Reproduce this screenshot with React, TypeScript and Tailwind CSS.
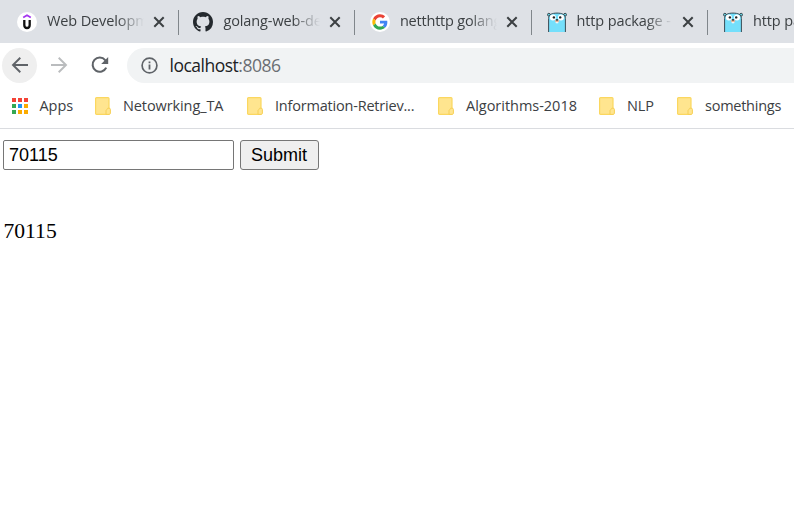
import type { ReactNode } from "react";

function Udemy() {
  return (
    <svg width="20" height="20" viewBox="0 0 20 20" className="shrink-0">
      <circle cx="10" cy="10" r="10" fill="#fff" />
      <path d="M6.2 5.5 10 3.3 13.8 5.5" fill="none" stroke="#a435f0" strokeWidth="1.8" />
      <path d="M7.3 8v5c0 2.1 1 3 2.7 3s2.7-.9 2.7-3V8" fill="none" stroke="#111" strokeWidth="2.3" />
    </svg>
  );
}

function Github() {
  return (
    <svg width="20" height="20" viewBox="0 0 16 16" className="shrink-0 -translate-x-px">
      <path
        fill="#24292e"
        d="M8 0C3.58 0 0 3.58 0 8c0 3.54 2.29 6.53 5.47 7.59.4.07.55-.17.55-.38 0-.19-.01-.82-.01-1.49-2.01.37-2.53-.49-2.69-.94-.09-.23-.48-.94-.82-1.13-.28-.15-.68-.52-.01-.53.63-.01 1.08.58 1.23.82.72 1.21 1.87.87 2.33.66.07-.52.28-.87.51-1.07-1.78-.2-3.64-.89-3.64-3.95 0-.87.31-1.59.82-2.15-.08-.2-.36-1.02.08-2.12 0 0 .67-.21 2.2.82.64-.18 1.32-.27 2-.27s1.36.09 2 .27c1.53-1.04 2.2-.82 2.2-.82.44 1.1.16 1.92.08 2.12.51.56.82 1.27.82 2.15 0 3.07-1.87 3.75-3.65 3.95.29.25.54.73.54 1.48 0 1.07-.01 1.93-.01 2.2 0 .21.15.46.55.38A8.01 8.01 0 0 0 16 8c0-4.42-3.58-8-8-8Z"
      />
    </svg>
  );
}

function Google() {
  return (
    <svg width="20" height="20" viewBox="0 0 20 20" className="shrink-0">
      <circle cx="10" cy="10" r="10" fill="#fff" />
      <g transform="translate(2.3 2.3) scale(.32)">
        <path fill="#EA4335" d="M24 9.5c3.54 0 6.71 1.22 9.21 3.6l6.85-6.85C35.9 2.38 30.47 0 24 0 14.62 0 6.51 5.38 2.56 13.22l7.98 6.19C12.43 13.72 17.74 9.5 24 9.5z" />
        <path fill="#4285F4" d="M46.98 24.55c0-1.57-.15-3.09-.38-4.55H24v9.02h12.94c-.58 2.96-2.26 5.48-4.78 7.18l7.73 6c4.51-4.18 7.09-10.36 7.09-17.65z" />
        <path fill="#FBBC05" d="M10.53 28.59A14.5 14.5 0 0 1 9.77 24c0-1.6.27-3.14.76-4.59l-7.98-6.19A23.99 23.99 0 0 0 0 24c0 3.88.92 7.54 2.56 10.78l7.97-6.19z" />
        <path fill="#34A853" d="M24 48c6.48 0 11.93-2.13 15.89-5.81l-7.73-6c-2.15 1.45-4.92 2.3-8.16 2.3-6.26 0-11.57-4.22-13.47-9.91l-7.98 6.19C6.51 42.62 14.62 48 24 48z" />
      </g>
    </svg>
  );
}

function Gopher() {
  return (
    <svg width="20" height="20" viewBox="0 0 20 20" className="shrink-0">
      <circle cx="1.9" cy="2.7" r="1.4" fill="#6ad7e5" stroke="#394b54" strokeWidth="1" />
      <circle cx="18.1" cy="2.7" r="1.4" fill="#6ad7e5" stroke="#394b54" strokeWidth="1" />
      <path d="M1.6 20V6.5C1.6 2.4 5 1.1 10 1.1s8.4 1.3 8.4 5.4V20" fill="#74dffb" stroke="#394b54" strokeWidth="1" />
      <circle cx="5.9" cy="5.4" r="3" fill="#fff" />
      <circle cx="14" cy="5.4" r="3" fill="#fff" />
      <circle cx="6.9" cy="5.4" r="1.2" fill="#222" />
      <circle cx="13.2" cy="5.4" r="1.2" fill="#222" />
      <rect x="8.7" y="9.5" width="2.6" height="1.7" rx=".5" fill="#fff" />
      <ellipse cx="10" cy="9" rx="2.2" ry="1.3" fill="#e8b69c" />
      <ellipse cx="10" cy="7.9" rx="1.2" ry=".8" fill="#333" />
    </svg>
  );
}

function Tab({ icon, title, tracking }: { icon: ReactNode; title: string; tracking: string }) {
  return (
    <div className="flex h-[43px] w-[176.5px] shrink-0 items-center pl-[15px]">
      {icon}
      <div
        className={`ml-[9.9px] w-[97px] -translate-y-px overflow-hidden whitespace-nowrap text-[14.5px] leading-[22px] text-[#3c4043] mask-[linear-gradient(to_right,black_72%,transparent)] ${tracking}`}
      >
        {title}
      </div>
      <svg width="12" height="12" viewBox="0 0 12 12" className="ml-[9px] shrink-0">
        <path d="m1.3 1.3 9.4 9.4M10.7 1.3 1.3 10.7" stroke="#3c4043" strokeWidth="2" />
      </svg>
      <div className="ml-auto h-[25px] w-px translate-y-px bg-[#80868b]" />
    </div>
  );
}

function Folder() {
  return (
    <svg width="16" height="18" viewBox="0 0 16 18" className="shrink-0">
      <rect x=".6" y=".6" width="13.4" height="16.8" rx="1" fill="#ffe58f" stroke="#fbd75f" strokeWidth="1.2" />
      <path d="M11 17.4v-3.7c0-1 .8-.8 1.2-1.5.2-.5.2-1 .7-1h1.3c.7 0 1.2.5 1.2 1.2v3.8c0 .7-.5 1.2-1.2 1.2Z" fill="#ffe58f" stroke="#f6cf55" strokeWidth="1" />
    </svg>
  );
}

function Bookmark({ label, width, tracking }: { label: string; width: string; tracking: string }) {
  return (
    <div className={`flex shrink-0 items-center ${width}`}>
      <Folder />
      <span className={`ml-[12px] whitespace-nowrap ${tracking}`}>{label}</span>
    </div>
  );
}

const appColors = ["#f44336", "#f44336", "#f44336", "#34a853", "#2196f3", "#fbab00", "#34a853", "#fbab00", "#fbab00"];

export default function App() {
  return (
    <div className="h-[532px] w-[794px] overflow-hidden bg-white font-['Open_Sans','Noto_Sans',sans-serif]">
      <div className="flex h-[43px] overflow-hidden bg-[#dee1e6] pl-[2px]">
        <Tab icon={<Udemy />} title="Web Development" tracking="tracking-[-0.1px]" />
        <Tab icon={<Github />} title="golang-web-dev" tracking="tracking-[-0.1px]" />
        <Tab icon={<Google />} title="netthttp golang" tracking="tracking-[-0.2px]" />
        <Tab icon={<Gopher />} title="http package - net" tracking="tracking-[-0.1px]" />
        <Tab icon={<Gopher />} title="http package - net" tracking="tracking-[-0.1px]" />
      </div>

      <div className="flex h-[45px] items-center pl-[2px]">
        <div className="flex size-[35px] items-center justify-center rounded-full bg-[#efefef]">
          <svg width="20" height="20" viewBox="0 0 20 20" className="-translate-y-px">
            <path d="M18 10H3M10.3 2.8 3 10l7.3 7.2" fill="none" stroke="#5f6368" strokeWidth="1.9" />
          </svg>
        </div>
        <svg width="20" height="20" viewBox="0 0 20 20" className="ml-[12px] -translate-y-px">
          <path d="M2 10h15M9.7 2.8 17 10l-7.3 7.2" fill="none" stroke="#babcbe" strokeWidth="1.9" />
        </svg>
        <svg width="20" height="20" viewBox="0 0 20 20" className="ml-[21px] -translate-y-px">
          <path d="M16.2 12.6A7.1 7.1 0 1 1 15.2 5.1L16 6" fill="none" stroke="#5f6368" strokeWidth="2.1" />
          <path d="M18.2 2v7h-7Z" fill="#5f6368" />
        </svg>
        <div className="ml-[17px] flex h-[35px] flex-1 items-center rounded-l-full bg-[#f1f3f4] pl-[14px]">
          <svg width="17" height="17" viewBox="0 0 17 17">
            <circle cx="8.5" cy="8.5" r="7.4" fill="none" stroke="#5f6368" strokeWidth="1.7" />
            <path d="M8.5 7.5v5M8.5 4.4v1.8" stroke="#5f6368" strokeWidth="1.8" />
          </svg>
          <span className="ml-[11.5px] -translate-y-px text-[17.5px] leading-6 tracking-[-0.5px] text-[#202124]">
            localhost<span className="text-[#6b6f73]">:8086</span>
          </span>
        </div>
      </div>

      <div className="flex h-[41px] items-start overflow-hidden border-b border-[#dadce0] text-[14.5px] leading-[22px] text-[#3c4043]">
        <div className="flex h-[36px] items-center">
          <div className="flex w-[95px] shrink-0 items-center pl-[12px]">
            <div className="grid grid-cols-3 gap-[2px]">
              {appColors.map((c, i) => (
                <div key={i} className="size-[4px]" style={{ background: c }} />
              ))}
            </div>
            <span className="ml-[11.5px] tracking-[-0.05px]">Apps</span>
          </div>
          <Bookmark label="Netowrking_TA" width="w-[152px]" tracking="tracking-[-0.1px]" />
          <Bookmark label="Information-Retriev..." width="w-[191px]" tracking="tracking-[-0.2px]" />
          <Bookmark label="Algorithms-2018" width="w-[161px]" tracking="tracking-[-0.02px]" />
          <Bookmark label="NLP" width="w-[78px]" tracking="tracking-[-0.1px]" />
          <Bookmark label="somethings" width="w-[118px]" tracking="tracking-[-0.25px]" />
        </div>
      </div>

      <div className="flex gap-[6px] pt-[11px] pl-[3px] font-['Liberation_Sans',sans-serif] text-[18px] text-black">
        <input
          type="text"
          defaultValue="70115"
          className="h-[30px] w-[231px] rounded-[2px] border border-[#767676] bg-white px-[5px] outline-none"
        />
        <button className="h-[30px] w-[79px] rounded-[3px] border border-[#767676] bg-[#efefef] pr-px leading-[28px]">Submit</button>
      </div>
      <div className="pt-[49px] pl-[3.5px] font-['Liberation_Serif',serif] text-[21.6px] leading-[25px] text-black">70115</div>
    </div>
  );
}
